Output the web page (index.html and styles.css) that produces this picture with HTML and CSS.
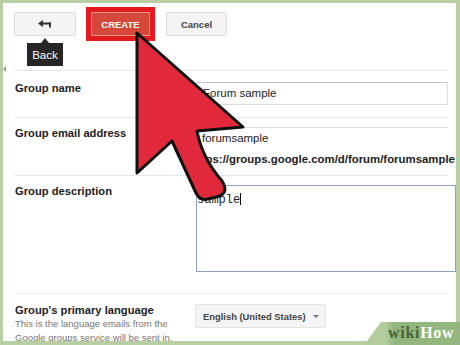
FILE: index.html
```html
<!DOCTYPE html>
<html>
<head>
<meta charset="utf-8">
<link rel="stylesheet" href="styles.css">
</head>
<body>
<div class="frame">
  <div class="toolbar">
    <button class="btn back" aria-label="Back">
      <svg class="back-icon" width="14" height="8" viewBox="0 0 14 8">
        <polygon points="0,3.5 5,0 5,7" fill="#333"/>
        <rect x="4" y="2.5" width="9" height="2" fill="#333"/>
        <rect x="11" y="2.5" width="2" height="5" fill="#333"/>
      </svg>
    </button>
    <button class="btn create">CREATE</button>
    <button class="btn cancel">Cancel</button>
    <div class="tooltip">Back</div>
  </div>
  <span class="handle"></span>
  <div class="form">
    <div class="row r1">
      <div class="label">Group name</div>
      <div class="field"><div class="input">Forum sample</div></div>
    </div>
    <div class="row r2">
      <div class="label">Group email address</div>
      <div class="field">
        <div class="input email">forumsample</div>
        <div class="url">https://groups.google.com/d/forum/forumsample</div>
      </div>
    </div>
    <div class="row r3">
      <div class="label">Group description</div>
      <div class="field"><div class="textarea">sample<span class="caret"></span></div></div>
    </div>
    <div class="row r4">
      <div class="label">Group's primary language
        <div class="hint">This is the language emails from the<br>Google groups service will be sent in.</div>
      </div>
      <div class="field"><div class="select">English (United States)<span class="dd"></span></div></div>
    </div>
  </div>
</div>
<svg class="arrow" width="460" height="345" viewBox="0 0 460 345">
  <path d="M137,33 L243,127 L197,131 Q202,158 222,181 Q230,194 216,197 L208,199 Q200,201 196,193 L172,141 L137,173 Z" fill="#e2293c" stroke="#111" stroke-width="3" stroke-linejoin="round"/>
</svg>
<div class="logo"><span class="wiki">wiki</span><span class="how">How</span></div>
</body>
</html>
```
FILE: styles.css
```css
html, body {
  margin: 0;
  padding: 0;
}
body {
  width: 460px;
  height: 345px;
  position: relative;
  overflow: hidden;
  background: #fff;
  color: #222;
  font-family: "Liberation Sans", Arial, sans-serif;
}
.frame {
  box-sizing: border-box;
  width: 460px;
  height: 345px;
  border: 3px solid #b8cfa4;
  border-right-width: 4px;
  border-bottom-width: 4px;
  overflow: hidden;
  position: relative;
  background: #fff;
}
.toolbar {
  position: relative;
  display: flex;
  align-items: flex-start;
  padding: 9px 0 0 11px;
  height: 58px;
}
.btn {
  box-sizing: border-box;
  height: 24px;
  margin: 0;
  padding: 0;
  border: 1px solid #dcdcdc;
  border-radius: 2px;
  background: #f4f4f4;
  font-family: "Liberation Sans", Arial, sans-serif;
  font-weight: bold;
  font-size: 9.5px;
  color: #444;
  display: flex;
  align-items: center;
  justify-content: center;
}
.back {
  width: 62px;
  margin-right: 15px;
}
.create {
  width: 59px;
  margin-right: 16px;
  border-radius: 0;
  background: #d4493a;
  border-color: #ef9487;
  color: #fff;
  box-shadow: 0 0 0 5px #e31b1f;
}
.cancel {
  width: 61px;
}
.tooltip {
  position: absolute;
  left: 24px;
  top: 40px;
  width: 36px;
  height: 23px;
  background: #262626;
  color: #fff;
  font-size: 11.5px;
  display: flex;
  align-items: center;
  justify-content: center;
}
.tooltip::before {
  content: "";
  position: absolute;
  left: 14px;
  top: -5px;
  border-left: 4px solid transparent;
  border-right: 4px solid transparent;
  border-bottom: 5px solid #262626;
}
.handle {
  position: absolute;
  left: 0;
  top: 63px;
  width: 0;
  height: 0;
  border-top: 3px solid transparent;
  border-bottom: 3px solid transparent;
  border-right: 3px solid #9a9a9a;
}
.form {
  padding: 0 8px 0 12px;
}
.row {
  display: grid;
  grid-template-columns: 181px 1fr;
  border-top: 1px solid #e6e6e6;
}
.r1 { padding: 11px 0 12px; }
.r2 { padding: 9px 0 8px; }
.r3 { padding: 9px 0 21px; }
.r4 { padding: 10px 0 0; border-top-color: #f1f1f1; }
.label {
  font-weight: bold;
  font-size: 11.2px;
  line-height: 13px;
  color: #222;
}
.hint {
  font-weight: normal;
  font-size: 9.5px;
  line-height: 14px;
  color: #777;
}
.field {
  min-width: 0;
}
.input {
  box-sizing: border-box;
  height: 23px;
  border: 1px solid #dcdcdc;
  border-top-color: #c6c6c6;
  padding: 0 6px;
  font-size: 11.5px;
  line-height: 21px;
  color: #222;
  white-space: nowrap;
}
.email {
  border: none;
  border-top: 1px solid #e0e0e0;
}
.url {
  margin: 1px 0 0 -5px;
  font-weight: bold;
  font-size: 11.4px;
  line-height: 16px;
  white-space: nowrap;
  color: #222;
}
.textarea {
  box-sizing: border-box;
  width: 260px;
  height: 87px;
  border: 1px solid #8f9ecb;
  padding: 7px 0;
  font-family: "Liberation Mono", "Courier New", monospace;
  font-size: 12px;
  line-height: 14px;
  color: #222;
}
.caret {
  display: inline-block;
  width: 1px;
  height: 12px;
  background: #111;
  vertical-align: -2px;
}
.select {
  box-sizing: border-box;
  width: 131px;
  height: 24px;
  margin-left: -1px;
  background: #f5f5f5;
  border: 1px solid #e4e4e4;
  border-radius: 2px;
  padding-left: 7px;
  display: flex;
  align-items: center;
  font-weight: bold;
  font-size: 9.4px;
  color: #444;
  white-space: nowrap;
}
.dd {
  width: 0;
  height: 0;
  margin-left: 7px;
  border-left: 3px solid transparent;
  border-right: 3px solid transparent;
  border-top: 3px solid #777;
}
.arrow {
  position: absolute;
  left: 0;
  top: 0;
}
.logo {
  position: absolute;
  left: 364px;
  top: 322px;
  width: 96px;
  height: 23px;
  box-sizing: border-box;
  padding: 2px 0 0 24px;
  background: linear-gradient(90deg, #b3cd9f 0, #b3cd9f 22px, #92b67d 30px, #92b67d 100%);
  clip-path: polygon(17px 0, 100% 0, 100% 100%, 0 100%);
  font-family: "Liberation Serif", "Times New Roman", serif;
  font-weight: bold;
  font-size: 16px;
  line-height: 18px;
  letter-spacing: 0.7px;
}
.wiki {
  color: #466437;
}
.how {
  color: #fff;
}
```
